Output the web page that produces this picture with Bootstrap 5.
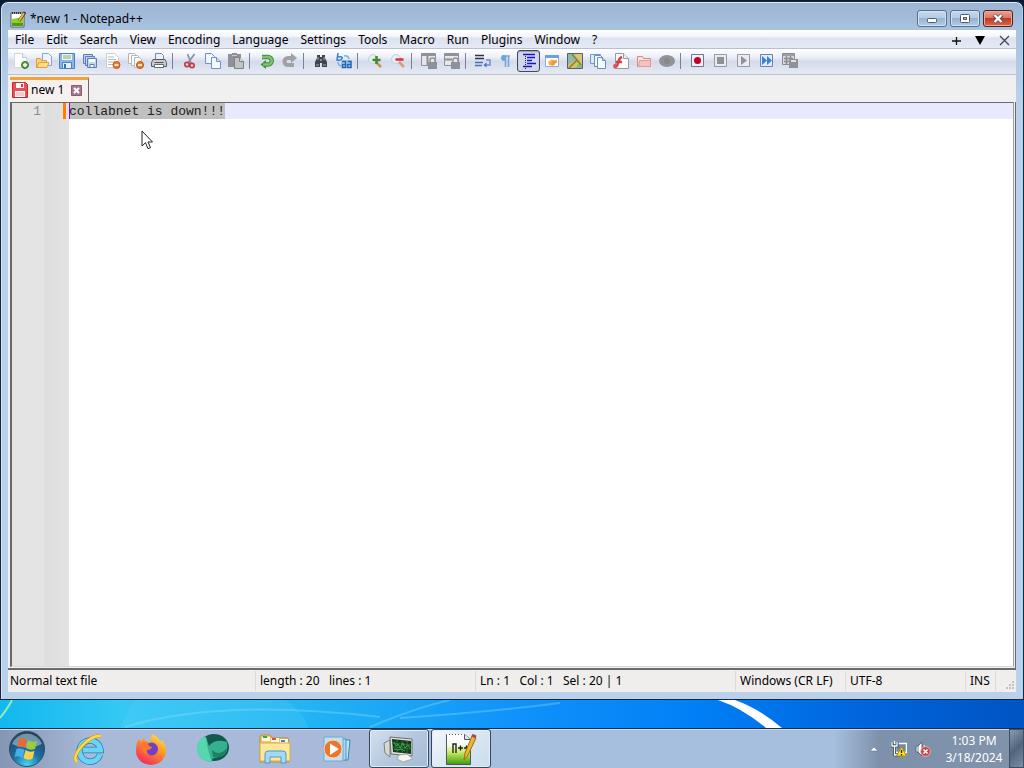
<!DOCTYPE html>
<html lang="en">
<head>
    <meta charset="UTF-8">
    <meta name="viewport" content="width=device-width, initial-scale=1.0">
    <title>*new 1 - Notepad++</title>
    <link href="https://cdn.jsdelivr.net/npm/bootstrap@5.3.0/dist/css/bootstrap.min.css" rel="stylesheet">
    <style>
        body {
            background: #0b1a33;
            font-family: "Noto Sans", "Open Sans", sans-serif;
            font-size: 12px;
            line-height: 16px;
            color: #000;
        }
        button { font-size: inherit; line-height: inherit; color: inherit; background: none; border: 0; padding: 0; }
        svg { display: block; flex: none; }

        /* window frame */
        .app-window {
            margin-top: 1px;
            border: 1px solid #18283c;
            border-radius: 8px 8px 0 0;
            padding: 0 7px 7px;
            background: linear-gradient(#9cb4d2, #a8c2e0 28px, #b9d1ea 100px, #b9d1ea);
            box-shadow: inset 0 1px #dce9f6, inset 1px 0 #d4e4f4, inset -1px 0 #9fd8ee;
        }
        .title-bar { height: 28px; padding: 5px 3px 0 2px; }
        .title-bar h1 { font-size: 12px; line-height: 16px; margin: 0; font-weight: 400; }
        .caption-group { gap: 3px; }
        .caption-btn {
            width: 30px;
            height: 17px;
            border: 1px solid #56708e;
            border-radius: 3px;
            background: linear-gradient(#c5d8ec, #b3cae3 48%, #97b2d0 50%, #b2cde8);
            box-shadow: inset 0 0 0 1px #d3e2f2;
        }
        .caption-close {
            border-color: #55201c;
            background: linear-gradient(#e9a393, #d97563 48%, #c03a22 50%, #d8694c);
            box-shadow: inset 0 0 0 1px #eba999;
        }

        .menu-bar {
            height: 19px;
            padding: 2px 4px 0 7px;
            gap: 12px;
            background: linear-gradient(#fff, #f4f6fb 35%, #dde2f0 45%, #e6eaf6);
            border-bottom: 1px solid #b9bfd0;
        }
        .menu-side { gap: 8px; }
        .menu-side button { width: 16px; }

        .tool-bar {
            height: 26px;
            padding: 0 1px 1px;
            background: linear-gradient(#fff, #eef1f8 30%, #d5dbeb 50%, #e6eaf5);
            border-bottom: 1px solid #bcc1cb;
        }
        .tool-btn { width: 23px; height: 22px; border: 1px solid transparent; border-radius: 3px; }
        .tool-btn.pressed { border-color: #44485a; background: #d3d8e6; box-shadow: inset 0 1px 1px #9aa0b4; }
        .tool-sep { width: 8px; height: 16px; }
        .tool-sep::before { content: ""; display: block; width: 1px; height: 100%; margin-left: 2px; background: #7b8195; }

        .tab-strip { height: 27px; background: #f0f0f0; padding: 2px 2px 0; }
        .doc-tab {
            gap: 3px;
            width: 79px;
            padding: 0 2px 2px;
            border-top: 3px solid #f5a23c;
            border-right: 1px solid #696969;
            background: #f6f1ef;
        }

        /* edit area */
        .editor {
            margin: 0;
            border: 1px solid #696969;
            border-left-width: 2px;
            border-right-color: #a0a0a0;
            border-bottom-color: #d8d8d8;
            background: #fff;
            font-family: "Liberation Mono", monospace;
            font-size: 13px;
            line-height: 18px;
        }
        .editor-wrap { background: #f0f0f0; padding: 0 1px 1px 2px; border-bottom: 2px solid #6b6b6b; border-right: 1px solid #696969; }
        .line-numbers { width: 57px; padding-right: 3px; background: linear-gradient(90deg, #e4e4e4 32px, #dedede 33px, #e2e2e2); color: #8c8c8c; }
        .line-numbers span { width: 29px; text-align: right; }
        .line-numbers i { width: 3px; height: 16px; background: #ff8000; }
        /* current line and 20-character selection are painted behind the text */
        .code-box {
            resize: none;
            border: 0;
            outline: 0;
            padding: 0;
            color: #222;
            line-height: 18px;
            background:
                linear-gradient(#8000ff, #8000ff) 0 0 / 1px 16px no-repeat,
                linear-gradient(#c0c0c0, #c0c0c0) 0 0 / 20ch 16px no-repeat,
                linear-gradient(#e8e8ff, #e8e8ff) 0 0 / 100% 16px no-repeat,
                #fff;
        }
        .pointer { position: absolute; left: 129px; top: 27px; }

        .status-bar { height: 22px; background: #f0eeed; }
        .status-bar > div { padding: 0 4px; border-right: 1px solid #dcdad8; height: 20px; line-height: 20px; white-space: pre; }
        .status-bar > div:first-child { padding-left: 2px; }
        .status-bar > .size-grip { width: 20px; border: 0; padding: 0; }
        .w-length { width: 220px; }
        .w-caret { width: 260px; }
        .w-eol { width: 110px; }
        .w-enc { width: 120px; }
        .w-ins { width: 30px; }

        .wallpaper { height: 28px; background: linear-gradient(90deg, #12b8ee, #35c8f5 12%, #22b4f4 30%, #0f93fb 50%, #0080f6 68%, #0064dc 85%, #0054c2); }

        .task-bar {
            height: 40px;
            border-top: 1px solid #17304f;
            box-shadow: inset 0 1px #d0dced;
            background: linear-gradient(90deg, #8496b3, #93a5c3 40px, #a9b9d8 90px, #a9b9da 360px, #a6bfde 500px, #a6bfde calc(100% - 190px), #7e91ab calc(100% - 145px), #8093aa);
        }
        .task-item { width: 60px; margin-right: 2px; border-radius: 3px; }
        .task-item.running { border: 1px solid #354761; background: linear-gradient(135deg, #d5e0ef, #b5c8df 50%, #a5bbd5); box-shadow: inset 0 0 0 1px #e4edf7; }
        .task-item.current { background: linear-gradient(135deg, #f2f7fc, #d8e5f1 60%, #cadcec); }
        .start-btn { width: 54px; margin-right: 5px; }
        .tray { color: #fff; gap: 8px; }
        .clock { width: 70px; line-height: 17px; text-align: center; }
        .show-desktop { width: 15px; border: 1px solid #3d4e63; background: linear-gradient(135deg, #8b9bae, #51647b 50%, #7b8ea4); }
    </style>
</head>
<body class="vh-100 d-flex flex-column overflow-hidden">
    <main class="app-window flex-grow-1 d-flex flex-column">
        <header class="title-bar d-flex align-items-center">
            <svg width="16" height="18" viewBox="0 0 16 18"><path d="M1 3h13v14H1z" fill="#fff" stroke="#555"/><path d="M2 9l11-2v9H2z" fill="#8ed028"/><path d="M2 13h11v3H2z" fill="#4c9c18"/><path d="M2 3h10" stroke="#333" stroke-width="2" stroke-dasharray="1 1"/><path d="M9 11L15 2" stroke="#34332b" stroke-width="3"/><path d="M9 11L14 3" stroke="#efb531" stroke-width="2"/></svg>
            <h1 class="ms-1 me-auto">*new 1 - Notepad++</h1>
            <div class="caption-group d-flex">
                <button class="caption-btn d-flex align-items-center justify-content-center" aria-label="Minimize"><svg width="12" height="11" viewBox="0 0 12 11"><rect x="1.500" y="5.500" width="9" height="4" rx="1" fill="#fff" stroke="#525b6b"/></svg></button>
                <button class="caption-btn d-flex align-items-center justify-content-center" aria-label="Restore"><svg width="12" height="11" viewBox="0 0 12 11"><rect x="1.500" y="1.500" width="9" height="8" rx="1" fill="#fff" stroke="#525b6b"/><rect x="4.500" y="4.500" width="3" height="2" fill="#a5bedb" stroke="#525b6b"/></svg></button>
                <button class="caption-btn caption-close d-flex align-items-center justify-content-center" aria-label="Close"><svg width="12" height="11" viewBox="0 0 12 11"><path d="M2 2l8 7M10 2L2 9" stroke="#5c4a50" stroke-width="4"/><path d="M2.500 2l7 7M9.500 2l-7 7" stroke="#fff" stroke-width="2.400"/></svg></button>
            </div>
        </header>

        <nav class="menu-bar d-flex align-items-center">
            <button>File</button>
            <button>Edit</button>
            <button>Search</button>
            <button>View</button>
            <button>Encoding</button>
            <button>Language</button>
            <button>Settings</button>
            <button>Tools</button>
            <button>Macro</button>
            <button>Run</button>
            <button>Plugins</button>
            <button>Window</button>
            <button>?</button>
            <div class="menu-side d-flex align-items-center ms-auto">
                <button aria-label="New tab"><svg class="mx-auto" width="9" height="9" viewBox="0 0 9 9"><path d="M4.500 1v8M0 5h9" stroke="#111" stroke-width="1.300"/></svg></button>
                <button aria-label="Tab list"><svg class="mx-auto" width="10" height="9" viewBox="0 0 10 9"><path d="M0 0h10L5 9z"/></svg></button>
                <button aria-label="Close tab"><svg class="mx-auto" width="11" height="11" viewBox="0 0 11 11"><path d="M1 1l9 9M10 1l-9 9" stroke="#454956" stroke-width="1.300"/></svg></button>
            </div>
        </nav>

        <div class="tool-bar d-flex align-items-center" role="toolbar">
            <button class="tool-btn d-flex align-items-center justify-content-center" aria-label="New"><svg width="16" height="16" viewBox="0 0 16 16"><path d="M1.500.5h8l4 4v10h-12z" fill="#fff" stroke="#d2d6de"/><path d="M9.500.5v4h4" fill="#eee" stroke="#c5cad2"/><circle cx="12" cy="12" r="3.500" fill="#5fa746" stroke="#377a2b"/><path d="M12 10v4M10 12h4" stroke="#fff" stroke-width="1.300"/></svg></button>
            <button class="tool-btn d-flex align-items-center justify-content-center" aria-label="Open"><svg width="16" height="16" viewBox="0 0 16 16"><path d="M6.500.5h6l3 3v9h-9z" fill="#edf4fd" stroke="#86a5d4"/><path d="M.5 5.500h4l1 2h5v7H.5z" fill="#fbd277" stroke="#dfa035"/><path d="M1 14.500l2-5h10l-2 5z" fill="#ffdf8e" stroke="#dfa035"/></svg></button>
            <button class="tool-btn d-flex align-items-center justify-content-center" aria-label="Save"><svg width="16" height="16" viewBox="0 0 16 16"><path d="M.5.5h15v15H.5z" fill="#8db5e6" stroke="#4a80c4"/><path d="M3 1h10v6H3z" fill="#eef4fb"/><path d="M4 3h8M4 5h8" stroke="#87af61"/><path d="M3.500 9.500h9v6h-9z" fill="#e9f1fb" stroke="#4a80c4"/><path d="M5 11h2v4H5z" fill="#326db8"/></svg></button>
            <button class="tool-btn d-flex align-items-center justify-content-center" aria-label="Save all"><svg width="16" height="16" viewBox="0 0 16 16"><g fill="#c2d5ef" stroke="#5b7fb5"><path d="M1.500 1.500h9v9h-9z"/><path d="M3.500 3.500h9v9h-9z"/><path d="M5.500 5.500h9v9h-9z"/></g><path d="M7 6h6v3H7z" fill="#fff"/><path d="M8 11.500h4v3H8z" fill="#fff" stroke="#5b7fb5"/></svg></button>
            <button class="tool-btn d-flex align-items-center justify-content-center" aria-label="Close"><svg width="16" height="16" viewBox="0 0 16 16"><path d="M1.500.5h8l4 4v10h-12z" fill="#fff" stroke="#d0ccc8"/><path d="M3 4h6M3 6.500h8M3 9h7M3 11.500h5" stroke="#b9b6b3"/><circle cx="11.500" cy="12" r="3.500" fill="#ec7c32" stroke="#ba5419"/><path d="M9.500 12h4" stroke="#fff" stroke-width="1.600"/></svg></button>
            <button class="tool-btn d-flex align-items-center justify-content-center" aria-label="Close all"><svg width="16" height="16" viewBox="0 0 16 16"><g fill="#fff" stroke="#b7b4b4"><path d="M.5.5h6l2 2v8h-8z"/><path d="M3.500 2.500h6l2 2v8h-8z"/><path d="M6.500 4.500h5l2 2v8h-7z"/></g><circle cx="12" cy="12" r="3.500" fill="#ec7c32" stroke="#ba5419"/><path d="M10 12h4" stroke="#fff" stroke-width="1.600"/></svg></button>
            <button class="tool-btn d-flex align-items-center justify-content-center" aria-label="Print"><svg width="16" height="16" viewBox="0 0 16 16"><path d="M4.500 8V.5h6l2 2V8" fill="#e9f1fb" stroke="#6f88b5"/><path d="M2 6.500h12l1.500 3v4H.5v-4z" fill="#c9c9cc" stroke="#5a5c63"/><path d="M3.500 9.500h9" stroke="#55575e"/><path d="M3.500 11.500h9v3h-9z" fill="#fff" stroke="#66696f"/></svg></button>
            <div class="tool-sep"></div>
            <button class="tool-btn d-flex align-items-center justify-content-center" aria-label="Cut"><svg width="16" height="16" viewBox="0 0 16 16"><path d="M12.500 1L6 10M5.500 1L9 10" stroke="#8493ab" stroke-width="1.700"/><circle cx="5" cy="11.500" r="2.200" fill="none" stroke="#c43b3b" stroke-width="1.700"/><circle cx="10" cy="12.500" r="2.200" fill="none" stroke="#c43b3b" stroke-width="1.700"/></svg></button>
            <button class="tool-btn d-flex align-items-center justify-content-center" aria-label="Copy"><svg width="16" height="16" viewBox="0 0 16 16"><g fill="#f4f8fe" stroke="#6d91cd"><path d="M.5.5h6l3 3v7h-9z"/><path d="M6.500 4.500h5l4 4v7h-9z"/><path d="M11.500 4.500v4h4" fill="#cfdef4"/></g></svg></button>
            <button class="tool-btn d-flex align-items-center justify-content-center" aria-label="Paste"><svg width="16" height="16" viewBox="0 0 16 16"><path d="M0 1h4V0h5v1h4v13H0z" fill="#929296"/><path d="M4 2.500h5" stroke="#c9c9cc"/><path d="M6.500 4.500h5l4 4v7h-9z" fill="#c2c2c5" stroke="#808084"/><path d="M11.500 4.500v4h4" fill="#ddd" stroke="#808084"/></svg></button>
            <div class="tool-sep"></div>
            <button class="tool-btn d-flex align-items-center justify-content-center" aria-label="Undo"><svg width="16" height="16" viewBox="0 0 16 16"><path d="M3 4h6a3.500 3.500 0 010 7.500H6" fill="none" stroke="#438b3b" stroke-width="4.500"/><path d="M7 7v9l-5.500-4.500z" fill="#438b3b"/><path d="M3 4h6a3.500 3.500 0 010 7.500H4" fill="none" stroke="#7cc26f" stroke-width="2.500"/></svg></button>
            <button class="tool-btn d-flex align-items-center justify-content-center" aria-label="Redo"><svg width="16" height="16" viewBox="0 0 16 16"><path d="M12 12H6a3.500 3.500 0 010-7h4" fill="none" stroke="#a0a0a5" stroke-width="4"/><path d="M9 0l6 5-6 5z" fill="#a0a0a5"/></svg></button>
            <div class="tool-sep"></div>
            <button class="tool-btn d-flex align-items-center justify-content-center" aria-label="Find"><svg width="16" height="16" viewBox="0 0 16 16"><path d="M4 2h3v2h2V2h3v3l2 4v5H9v-4H7v4H2V9l2-4z" fill="#41434a"/><path d="M3 12h3M10 12h3M5 4v3M11 4v3" stroke="#aab0b8"/><path d="M7 7h2" stroke="#dce0e6"/></svg></button>
            <button class="tool-btn d-flex align-items-center justify-content-center" aria-label="Replace"><svg width="16" height="16" viewBox="0 0 16 16"><path d="M2 0L1 7q4 1 5-1.500T2 4" fill="none" stroke="#3b7dcc" stroke-width="1.500"/><path d="M8 3q4-1 5 3M2 9q0 4 4 4" fill="none" stroke="#78b4df" stroke-width="1.500"/><path d="M5 7h11v8H5z" fill="#a9cdf0"/><path d="M6 8.500h3.500v6H6.500v-3h3M11.500 8.500H15v6h-3.500v-3H15" fill="none" stroke="#2565b4" stroke-width="1.400"/></svg></button>
            <div class="tool-sep"></div>
            <button class="tool-btn d-flex align-items-center justify-content-center" aria-label="Zoom in"><svg width="16" height="16" viewBox="0 0 16 16"><circle cx="6" cy="6" r="4.500" fill="#dff0ed" stroke="#bdd5dc"/><path d="M9 9l5 5" stroke="#c99343" stroke-width="2.500"/><path d="M9.500 3v8M5.500 7h8" stroke="#4a8733" stroke-width="2.500"/></svg></button>
            <button class="tool-btn d-flex align-items-center justify-content-center" aria-label="Zoom out"><svg width="16" height="16" viewBox="0 0 16 16"><circle cx="6" cy="6" r="4.500" fill="#e4eff5" stroke="#bdd5dc"/><path d="M9 9l5 5" stroke="#d99c73" stroke-width="2.500"/><path d="M5.500 6.500h8" stroke="#e22d39" stroke-width="2.500"/></svg></button>
            <div class="tool-sep"></div>
            <button class="tool-btn d-flex align-items-center justify-content-center" aria-label="Synchronize vertical scrolling"><svg width="16" height="16" viewBox="0 0 16 16"><path d="M.5.5h14v12H.5z" fill="#e5e7ed" stroke="#909097"/><path d="M0 2h15M6.500 3v9" stroke="#909097" stroke-width="2"/><path d="M7 9h9v7H7z" fill="#909097"/><path d="M9 9V7q0-2 2.500-2T14 7v2" fill="none" stroke="#909097" stroke-width="1.500"/></svg></button>
            <button class="tool-btn d-flex align-items-center justify-content-center" aria-label="Synchronize horizontal scrolling"><svg width="16" height="16" viewBox="0 0 16 16"><path d="M.5.5h14v12H.5z" fill="#e5e7ed" stroke="#909097"/><path d="M0 2h15M0 6.500h8" stroke="#909097" stroke-width="2"/><path d="M7 9h9v7H7z" fill="#909097"/><path d="M9 9V7q0-2 2.500-2T14 7v2" fill="none" stroke="#909097" stroke-width="1.500"/></svg></button>
            <div class="tool-sep"></div>
            <button class="tool-btn d-flex align-items-center justify-content-center" aria-label="Word wrap"><svg width="16" height="16" viewBox="0 0 16 16"><path d="M0 2.500h9M0 5.500h9" stroke="#30344a" stroke-width="1.300"/><path d="M0 9.500h8M0 12.500h7" stroke="#4b72bd" stroke-width="1.300"/><path d="M11 7h4v5h-5" fill="none" stroke="#6c91cf" stroke-width="1.500"/><path d="M8.500 12l3-2.500v5z" fill="#4b72bd"/></svg></button>
            <button class="tool-btn d-flex align-items-center justify-content-center" aria-label="Show all characters"><svg width="16" height="16" viewBox="0 0 16 16"><path d="M10.500 3v11M7.500 3v11M4 3h8" stroke="#6fa7dc" stroke-width="1.600"/><path d="M7 2H6a3 3 0 000 6h1z" fill="#6fa7dc"/></svg></button>
            <button class="tool-btn pressed d-flex align-items-center justify-content-center" aria-label="Show indent guide" aria-pressed="true"><svg width="16" height="16" viewBox="0 0 16 16"><path d="M2 1.500h12M6 4.500h8M6 7.500h5M6 10.500h9M2 13.500h9" stroke="#1414d4" stroke-width="1.700"/><path d="M4.500 3v13" stroke="#1414a0" stroke-dasharray="1 1"/></svg></button>
            <button class="tool-btn d-flex align-items-center justify-content-center" aria-label="User defined language"><svg width="16" height="16" viewBox="0 0 16 16"><path d="M1.500 2.500h13v11h-13z" fill="#fff" stroke="#8babdc"/><path d="M1 2h14v3H1z" fill="#709edb"/><path d="M4 9l4-3 1 1h4v2l-4 4-4-1z" fill="#f3b454"/><path d="M8 9h5M7 11h4" stroke="#da8622"/></svg></button>
            <button class="tool-btn d-flex align-items-center justify-content-center" aria-label="Document map"><svg width="16" height="16" viewBox="0 0 16 16"><path d="M.5.5h15v15H.5z" fill="#d8bf62" stroke="#4c6472"/><path d="M1 1h4l3 6-7 5z" fill="#8fb9a8"/><path d="M8 1h7v7z" fill="#d9c77c"/><path d="M9 15l2-4 4 1v3z" fill="#8bba7d"/><path d="M2 15L10 7M5 1l9 11" stroke="#7a7f42" stroke-width="1.500"/></svg></button>
            <button class="tool-btn d-flex align-items-center justify-content-center" aria-label="Document list"><svg width="16" height="16" viewBox="0 0 16 16"><path d="M.5 1.500h10v9H.5z" fill="#dceafa" stroke="#739ac7"/><g fill="#f5faff" stroke="#6990bd"><path d="M4.500 2.500h6l2 2v9h-8z"/><path d="M7.500 4.500h5l3 3v8h-8z"/></g><path d="M12.500 4.500v3h3" fill="#b9dcee" stroke="#6990bd"/></svg></button>
            <button class="tool-btn d-flex align-items-center justify-content-center" aria-label="Function list"><svg width="16" height="16" viewBox="0 0 16 16"><path d="M2.500.5h8l5 5v10h-13z" fill="#fafafa" stroke="#999a9e"/><path d="M10.500.5v5h5" fill="#eee" stroke="#999a9e"/><path d="M1 14q3 1 4-4t4-6M3 9h6" fill="none" stroke="#cd434b" stroke-width="2.400"/><circle cx="2" cy="13" r="2" fill="#d9575d"/></svg></button>
            <button class="tool-btn d-flex align-items-center justify-content-center" aria-label="Folder as workspace"><svg width="16" height="16" viewBox="0 0 16 16"><path d="M1.500 3.500h5l1 2h7v8h-13z" fill="#fbe4e2" stroke="#df8484"/><path d="M3.500 7.500h11v6h-12z" fill="#f5c2bf" stroke="#e59a98"/></svg></button>
            <button class="tool-btn d-flex align-items-center justify-content-center" aria-label="Monitoring"><svg width="16" height="16" viewBox="0 0 16 16"><ellipse cx="8" cy="8" rx="8" ry="6" fill="#929297"/><circle cx="8" cy="8" r="3" fill="#87878c"/></svg></button>
            <div class="tool-sep"></div>
            <button class="tool-btn d-flex align-items-center justify-content-center" aria-label="Record macro"><svg width="16" height="16" viewBox="0 0 16 16"><path d="M1.500 1.500h12v12h-12z" fill="#eef1f7" stroke="#70768d"/><circle cx="7.500" cy="7.500" r="3.500" fill="#c40026"/></svg></button>
            <button class="tool-btn d-flex align-items-center justify-content-center" aria-label="Stop recording"><svg width="16" height="16" viewBox="0 0 16 16"><path d="M1.500 1.500h12v12h-12z" fill="#e9ebf0" stroke="#999ba4"/><path d="M4 4h7v7H4z" fill="#909198"/></svg></button>
            <button class="tool-btn d-flex align-items-center justify-content-center" aria-label="Playback"><svg width="16" height="16" viewBox="0 0 16 16"><path d="M1.500 1.500h12v12h-12z" fill="#e9ebf0" stroke="#999ba4"/><path d="M5 3l6 4.500L5 12z" fill="#909198"/></svg></button>
            <button class="tool-btn d-flex align-items-center justify-content-center" aria-label="Run macro multiple times"><svg width="16" height="16" viewBox="0 0 16 16"><path d="M1.500 1.500h12v12h-12z" fill="#e2edfb" stroke="#6e83ad"/><path d="M3 3l5 4.500L3 12zM8 3l5 4.500L8 12z" fill="#3a83d2"/></svg></button>
            <button class="tool-btn d-flex align-items-center justify-content-center" aria-label="Save recorded macro"><svg width="16" height="16" viewBox="0 0 16 16"><path d="M.5.5h12v11H.5z" fill="#d7d9df" stroke="#8b8c92"/><path d="M0 2h13M2 5.500h9M2 8.500h5M4.500 3v8M8.500 3v8" stroke="#8b8c92" stroke-width="1.500"/><path d="M7 6h9v9H7z" fill="#909197"/><path d="M9 8h5" stroke="#e0e1e4" stroke-width="2"/></svg></button>
        </div>

        <div class="tab-strip d-flex">
            <div class="doc-tab d-flex align-items-center">
                <svg width="16" height="16" viewBox="0 0 16 16"><path d="M.5.5h13l2 2v13H.5z" fill="#e85058" stroke="#c42a32"/><path d="M4 1h8v5H4z" fill="#fff"/><path d="M9 2h2v3H9z" fill="#d83a42"/><path d="M3 9h10v6H3z" fill="#fff"/><path d="M4 11h8M4 13h8" stroke="#e59a9c"/></svg>
                <span class="me-auto">new 1</span>
                <button aria-label="Close new 1"><svg class="me-1" width="11" height="11" viewBox="0 0 11 11"><path d="M.5.5h10v10H.5z" fill="#a9768f" stroke="#8d5a76"/><path d="M3 3l5 5M8 3L3 8" stroke="#fff" stroke-width="2"/></svg></button>
            </div>
        </div>

        <div class="editor-wrap flex-grow-1 d-flex">
            <div class="editor flex-grow-1 d-flex position-relative">
                <div class="line-numbers d-flex justify-content-between">
                    <span>1</span><i></i>
                </div>
                <textarea class="code-box flex-grow-1" aria-label="new 1" spellcheck="false">collabnet is down!!!</textarea>
                <svg class="pointer" width="14" height="20" viewBox="0 0 14 20"><path d="M1 1v15l3.500-3.300 2.500 6 2.500-1-2.500-5.700h4.500z" fill="#fff" stroke="#222"/></svg>
            </div>
        </div>

        <footer class="status-bar d-flex align-items-center">
            <div class="flex-grow-1">Normal text file</div>
            <div class="w-length">length : 20   lines : 1</div>
            <div class="w-caret">Ln : 1   Col : 1   Sel : 20 | 1</div>
            <div class="w-eol">Windows (CR LF)</div>
            <div class="w-enc">UTF-8</div>
            <div class="w-ins">INS</div>
            <div class="size-grip d-flex align-items-end justify-content-end"><svg width="11" height="11" viewBox="0 0 11 11"><path d="M7 1h2v2H7zM4 4h2v2H4zM7 4h2v2H7zM1 7h2v2H1zM4 7h2v2H4zM7 7h2v2H7z" fill="#c3c4c6"/></svg></div>
        </footer>
    </main>

    <div class="wallpaper">
        <svg class="w-100 h-100" viewBox="0 0 1024 28" preserveAspectRatio="none">
            <path d="M120 28Q128 8 136 0h150q20 15 22 28z" fill="#7be0fb" opacity=".15"/>
            <path d="M0 18Q8 8 12 0" fill="none" stroke="#92eeb5" stroke-width="2"/>
            <path d="M125 27Q220-2 380 17M370 27Q415 8 450 0M400 18Q490 12 560 3" fill="none" stroke="#8ee0fb" stroke-width="2" opacity=".35"/>
            <path d="M718 0h17q25 9 47 28h-16Q742 8 718 0z" fill="#fff"/>
        </svg>
    </div>

    <footer class="task-bar d-flex">
        <button class="start-btn d-flex align-items-center justify-content-center" aria-label="Start"><svg width="38" height="38" viewBox="0 0 38 38"><defs><radialGradient id="orb" cx=".5" cy=".95" r=".9"><stop offset="0" stop-color="#45d8f3"/><stop offset=".45" stop-color="#1c6fa5"/><stop offset="1" stop-color="#21425e"/></radialGradient></defs><circle cx="19" cy="19" r="17.500" fill="url(#orb)" stroke="#334b66"/><path d="M4 14a16 16 0 0130 0q-14 7-30 0z" fill="#c7dcea" opacity=".5"/><path d="M11 9q4-2 8 1l-2 8q-4-3-8-1z" fill="#ee6931"/><path d="M20 10q4 3 9 1l-2 8q-5 2-9-1z" fill="#9ccb3e"/><path d="M8.500 19q4-2 8 1l-2 8q-4-3-8-1z" fill="#46aee9"/><path d="M17.500 20q4 3 9 1l-2 8q-5 2-9-1z" fill="#fbd04b"/></svg></button>
        <button class="task-item d-flex align-items-center justify-content-center" aria-label="Internet Explorer"><svg width="32" height="32" viewBox="0 0 32 32"><path d="M27 21.500a10.500 10.500 0 11.500-4.500H10" fill="none" stroke="#247cae" stroke-width="6.500"/><path d="M27 21.500a10.500 10.500 0 11.500-4.500H10" fill="none" stroke="#6bd3f5" stroke-width="5"/><path d="M4 29Q-1 24 9 13T28 3" fill="none" stroke="#c6921a" stroke-width="3.600"/><path d="M4 29Q-1 24 9 13T28 3" fill="none" stroke="#ffd94c" stroke-width="2.600"/></svg></button>
        <button class="task-item d-flex align-items-center justify-content-center" aria-label="Firefox"><svg width="32" height="32" viewBox="0 0 32 32"><defs><linearGradient id="fox" x1=".9" y1="0" x2=".3" y2="1"><stop offset="0" stop-color="#fff04a"/><stop offset=".45" stop-color="#ff9528"/><stop offset="1" stop-color="#f3295c"/></linearGradient></defs><path d="M17 1q7 3 8 8l2-2q4 5 4 11a15 14 0 01-30 0Q1 10 4 6l2 3 3-5 1 4q3 0 6 2-1-5 1-9z" fill="url(#fox)"/><circle cx="16.500" cy="16" r="6.500" fill="#7140c8"/><path d="M6 12q2-4 6-3l2 4 3 1q-1 3-5 3-1 3 3 5-8 0-9-10z" fill="#ff762c"/></svg></button>
        <button class="task-item d-flex align-items-center justify-content-center" aria-label="Browser"><svg width="34" height="32" viewBox="0 0 34 32"><ellipse cx="18" cy="14.500" rx="15" ry="13.500" fill="#125950"/><path d="M1 15Q2 5 10 4l3 9q6-8 18-4 2 13-8 15-9 1-7 5-14-1-15-14z" fill="#35b18f"/><path d="M1 15Q2 5 10 4q1 12 6 25Q1 27 1 15z" fill="#58d6ad"/><path d="M16 17q7 7 15-2-1 11-14 9z" fill="#1d8069"/></svg></button>
        <button class="task-item d-flex align-items-center justify-content-center" aria-label="Windows Explorer"><svg width="34" height="32" viewBox="0 0 34 32"><path d="M2 4q0-2 2-2h8l2 3h16l1 4v20H2z" fill="#efc861" stroke="#b88f35"/><path d="M4 4h8v4H4zM13 5h8v4h-8zM22 6h8v4h-8z" fill="#fff8dc"/><path d="M5 3h4v2H5z" fill="#36a24b"/><path d="M14 5h4v2h-4z" fill="#d8562e"/><path d="M23 7h4v2h-4z" fill="#3788d1"/><path d="M2 10h30v18H2z" fill="#fbe69a" stroke="#d3ad54"/><path d="M7 30V21q0-3 3-3h15q3 0 3 3v9h-5v-6H12v6z" fill="#a3d9f4" stroke="#4d9ac8"/></svg></button>
        <button class="task-item d-flex align-items-center justify-content-center" aria-label="Windows Media Player"><svg width="32" height="32" viewBox="0 0 32 32"><path d="M8 6l21 1-2 20H8z" fill="#c0e4f5" stroke="#3b86b2"/><path d="M5 5l20 1v21H5z" fill="#a4d7ef" stroke="#4d9abf"/><path d="M3 4h19v24H3z" fill="#c4e1f3" stroke="#6ea9cb"/><circle cx="12" cy="16" r="9" fill="#ee762a" stroke="#f9d6bd"/><path d="M9 10.500l9 5.500-9 6z" fill="#fff"/></svg></button>
        <button class="task-item running d-flex align-items-center justify-content-center" aria-label="System monitor"><svg width="34" height="32" viewBox="0 0 34 32"><path d="M2 10l6-3v17l-5-4z" fill="#d8d9d4" stroke="#7d817f"/><path d="M8 4l22 2v17L9 21z" fill="#dfe0d9" stroke="#6d706b"/><path d="M10 6l19 2v13l-18-2z" fill="#17391f"/><path d="M10 10l19 2M11 14l18 2M15 7v12M20 8v12M25 8v12" stroke="#2b7639"/><path d="M12 9l2 4 2-2 2 4 3-5 2 5 3-3 2 3M12 16l4 1 3-1 4 2" fill="none" stroke="#3faf4c"/><path d="M17 22l8-1 6 5-10 3-6-3z" fill="#f4f4ef" stroke="#a5a8a4"/></svg></button>
        <button class="task-item running current d-flex align-items-center justify-content-center" aria-label="*new 1 - Notepad++"><svg width="34" height="34" viewBox="0 0 34 34"><defs><linearGradient id="npp" x2="0" y2="1"><stop offset=".3" stop-color="#fff"/><stop offset=".6" stop-color="#c6ea62"/><stop offset="1" stop-color="#399b10"/></linearGradient></defs><path d="M2.500 2.500h18l6 5v25h-24z" fill="url(#npp)" stroke="#555"/><path d="M20.500 2.500v5h6" fill="#dfe9ef" stroke="#555"/><path d="M3 2.500h17" stroke="#fff" stroke-dasharray="2 1"/><path d="M9 21v-9h3v9M14 16h5M16.500 13.500v5M20 16h5M22.500 13.500v5" fill="none" stroke="#222" stroke-width="1.400"/><path d="M20 28l1-7 7-17 4 2-8 17z" fill="#eeb62d" stroke="#a46b1c"/><path d="M28 3l4 2" stroke="#9f4d46" stroke-width="3"/></svg></button>

        <div class="tray d-flex align-items-center ms-auto">
            <button aria-label="Show hidden icons"><svg width="10" height="6" viewBox="0 0 10 6"><path d="M1 5l4-4 4 4z" fill="#fff" stroke="#596f86" stroke-width=".5"/></svg></button>
            <svg class="ms-1" width="16" height="16" viewBox="0 0 16 16"><path d="M4.500 2.500h11v9h-11z" fill="#7289a5" stroke="#fff" stroke-width="1.500"/><path d="M1 1v4h5V1M3.500 5v10M3.500 14h5" fill="none" stroke="#334457" stroke-width="3"/><path d="M1 1v4h5V1M3.500 0v3M3.500 5v9h5" fill="none" stroke="#fff" stroke-width="1.300"/><path d="M10.500 6l5 9h-10z" fill="#ffe027" stroke="#b98b0a"/><path d="M10.500 9v3M10.500 13v1.500" stroke="#222" stroke-width="1.300"/></svg>
            <svg width="16" height="16" viewBox="0 0 16 16"><path d="M1 5h2l4-4v14l-4-4H1z" fill="#fff" stroke="#55677b"/><path d="M3 5v6" stroke="#738397"/><path d="M9 4q3 4 0 8" fill="none" stroke="#fff"/><circle cx="10.500" cy="10.500" r="4.800" fill="#d23b3d" stroke="#f1b1af"/><path d="M8.500 8.500l4 4M12.500 8.500l-4 4" stroke="#fff" stroke-width="1.700"/></svg>
            <div class="clock">1:03 PM<br>3/18/2024</div>
        </div>
        <button class="show-desktop" aria-label="Show desktop"></button>
    </footer>

    <script src="https://cdn.jsdelivr.net/npm/bootstrap@5.3.0/dist/js/bootstrap.bundle.min.js"></script>
</body>
</html>
